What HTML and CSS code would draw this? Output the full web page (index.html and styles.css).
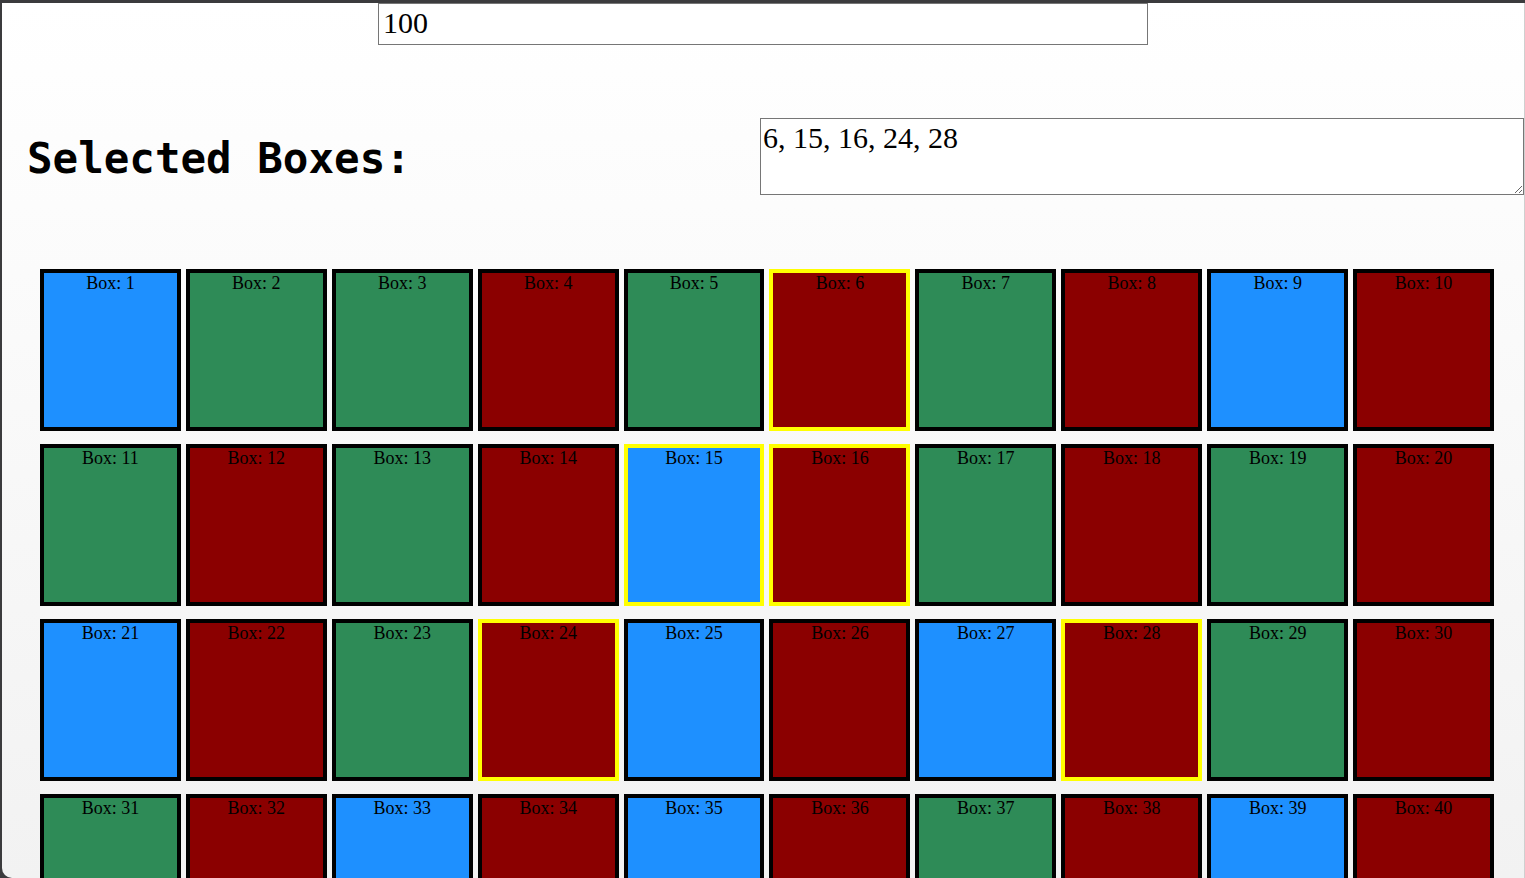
FILE: index.html
```html
<!DOCTYPE html>
<html lang="en">
<head>
<meta charset="utf-8">
<title>Boxes</title>
<link rel="stylesheet" href="styles.css">
</head>
<body>
<div class="window">
  <input class="amount" type="text" value="100">
  <div class="header">
    <h1 class="title">Selected Boxes:</h1>
    <textarea class="selected">6, 15, 16, 24, 28</textarea>
  </div>
  <div class="grid">
    <div class="box blue">Box: 1</div>
    <div class="box green">Box: 2</div>
    <div class="box green">Box: 3</div>
    <div class="box red">Box: 4</div>
    <div class="box green">Box: 5</div>
    <div class="box red picked">Box: 6</div>
    <div class="box green">Box: 7</div>
    <div class="box red">Box: 8</div>
    <div class="box blue">Box: 9</div>
    <div class="box red">Box: 10</div>
    <div class="box green">Box: 11</div>
    <div class="box red">Box: 12</div>
    <div class="box green">Box: 13</div>
    <div class="box red">Box: 14</div>
    <div class="box blue picked">Box: 15</div>
    <div class="box red picked">Box: 16</div>
    <div class="box green">Box: 17</div>
    <div class="box red">Box: 18</div>
    <div class="box green">Box: 19</div>
    <div class="box red">Box: 20</div>
    <div class="box blue">Box: 21</div>
    <div class="box red">Box: 22</div>
    <div class="box green">Box: 23</div>
    <div class="box red picked">Box: 24</div>
    <div class="box blue">Box: 25</div>
    <div class="box red">Box: 26</div>
    <div class="box blue">Box: 27</div>
    <div class="box red picked">Box: 28</div>
    <div class="box green">Box: 29</div>
    <div class="box red">Box: 30</div>
    <div class="box green">Box: 31</div>
    <div class="box red">Box: 32</div>
    <div class="box blue">Box: 33</div>
    <div class="box red">Box: 34</div>
    <div class="box blue">Box: 35</div>
    <div class="box red">Box: 36</div>
    <div class="box green">Box: 37</div>
    <div class="box red">Box: 38</div>
    <div class="box blue">Box: 39</div>
    <div class="box red">Box: 40</div>
  </div>
</div>
</body>
</html>
```
FILE: styles.css
```css
html, body {
  margin: 0;
  height: 100%;
  overflow: hidden;
}
body {
  background: #3b3b3d;
  padding: 3px 0 0 2px;
  box-sizing: border-box;
}
.window {
  height: 100%;
  background: linear-gradient(#ffffff, #f2f2f2);
  border-right: 1px solid #cfcfcf;
  border-bottom-left-radius: 10px;
  overflow: hidden;
  box-sizing: border-box;
  font-family: "Liberation Serif", "Times New Roman", serif;
}
.amount {
  display: block;
  box-sizing: border-box;
  width: 770px;
  height: 42px;
  margin: 0 auto;
  padding: 0 4px 3px;
  border: 1px solid #767676;
  background: #fff;
  font-family: "Liberation Serif", "Times New Roman", serif;
  font-size: 30px;
  color: #000;
  outline: none;
}
.header {
  display: flex;
  align-items: center;
  justify-content: space-between;
  margin-top: 73px;
  padding-left: 25px;
}
.title {
  margin: 4px 0 0;
  font-family: "DejaVu Sans Mono", monospace;
  font-weight: bold;
  font-size: 42.5px;
  color: #000;
}
.selected {
  box-sizing: border-box;
  width: 764px;
  height: 77px;
  margin: 0;
  padding: 2px;
  border: 1px solid #767676;
  background: #fff;
  font-family: "Liberation Serif", "Times New Roman", serif;
  font-size: 30px;
  color: #000;
  outline: none;
}
.grid {
  display: grid;
  width: 1454px;
  grid-template-columns: repeat(10, 1fr);
  column-gap: 5px;
  row-gap: 12.9px;
  margin: 74px 0 0 38px;
}
.box {
  box-sizing: border-box;
  height: 162px;
  border: 4px solid #000;
  text-align: center;
  font-size: 18px;
  color: #000;
}
.blue { background: #1e90ff; }
.green { background: #2e8b57; }
.red { background: #8b0000; }
.picked { border-color: #ffff00; }
```
